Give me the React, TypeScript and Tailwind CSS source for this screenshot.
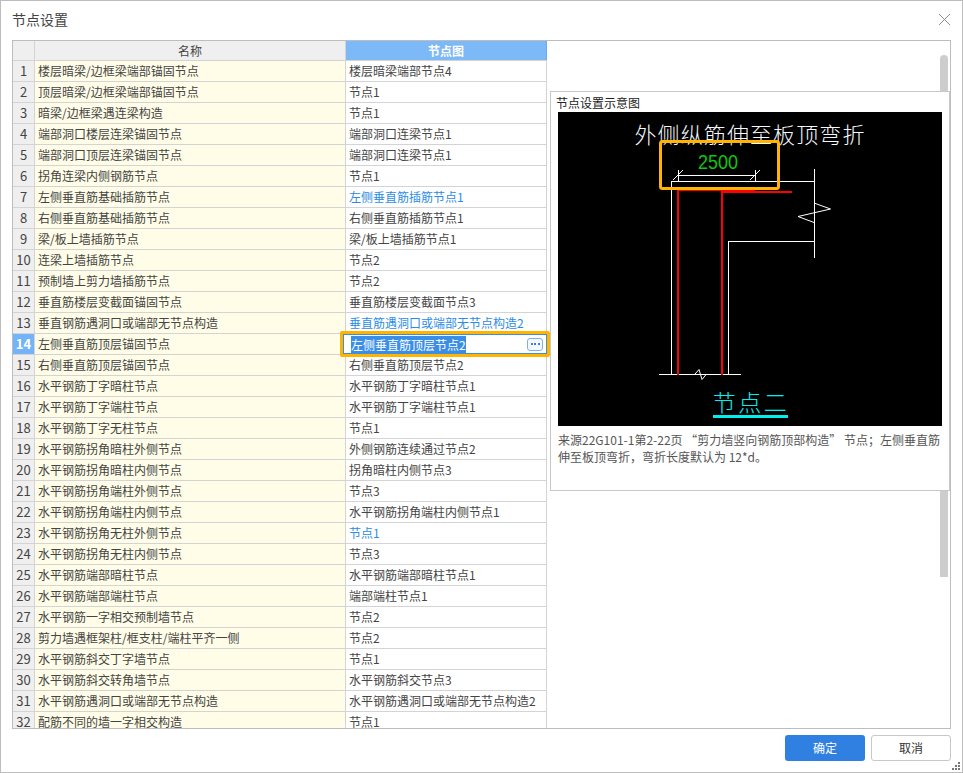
const font = "font-['Noto_Sans_CJK_SC','Noto_Sans',sans-serif]";

type Row = { name: string; node: string; link?: boolean };

const rows: Row[] = [
  { name: "楼层暗梁/边框梁端部锚固节点", node: "楼层暗梁端部节点4" },
  { name: "顶层暗梁/边框梁端部锚固节点", node: "节点1" },
  { name: "暗梁/边框梁遇连梁构造", node: "节点1" },
  { name: "端部洞口楼层连梁锚固节点", node: "端部洞口连梁节点1" },
  { name: "端部洞口顶层连梁锚固节点", node: "端部洞口连梁节点1" },
  { name: "拐角连梁内侧钢筋节点", node: "节点1" },
  { name: "左侧垂直筋基础插筋节点", node: "左侧垂直筋插筋节点1", link: true },
  { name: "右侧垂直筋基础插筋节点", node: "右侧垂直筋插筋节点1" },
  { name: "梁/板上墙插筋节点", node: "梁/板上墙插筋节点1" },
  { name: "连梁上墙插筋节点", node: "节点2" },
  { name: "预制墙上剪力墙插筋节点", node: "节点2" },
  { name: "垂直筋楼层变截面锚固节点", node: "垂直筋楼层变截面节点3" },
  { name: "垂直钢筋遇洞口或端部无节点构造", node: "垂直筋遇洞口或端部无节点构造2", link: true },
  { name: "左侧垂直筋顶层锚固节点", node: "左侧垂直筋顶层节点2" },
  { name: "右侧垂直筋顶层锚固节点", node: "右侧垂直筋顶层节点2" },
  { name: "水平钢筋丁字暗柱节点", node: "水平钢筋丁字暗柱节点1" },
  { name: "水平钢筋丁字端柱节点", node: "水平钢筋丁字端柱节点1" },
  { name: "水平钢筋丁字无柱节点", node: "节点1" },
  { name: "水平钢筋拐角暗柱外侧节点", node: "外侧钢筋连续通过节点2" },
  { name: "水平钢筋拐角暗柱内侧节点", node: "拐角暗柱内侧节点3" },
  { name: "水平钢筋拐角端柱外侧节点", node: "节点3" },
  { name: "水平钢筋拐角端柱内侧节点", node: "水平钢筋拐角端柱内侧节点1" },
  { name: "水平钢筋拐角无柱外侧节点", node: "节点1", link: true },
  { name: "水平钢筋拐角无柱内侧节点", node: "节点3" },
  { name: "水平钢筋端部暗柱节点", node: "水平钢筋端部暗柱节点1" },
  { name: "水平钢筋端部端柱节点", node: "端部端柱节点1" },
  { name: "水平钢筋一字相交预制墙节点", node: "节点2" },
  { name: "剪力墙遇框架柱/框支柱/端柱平齐一侧", node: "节点2" },
  { name: "水平钢筋斜交丁字墙节点", node: "节点1" },
  { name: "水平钢筋斜交转角墙节点", node: "水平钢筋斜交节点3" },
  { name: "水平钢筋遇洞口或端部无节点构造", node: "水平钢筋遇洞口或端部无节点构造2" },
  { name: "配筋不同的墙一字相交构造", node: "节点1" },
];

const NodeDiagram = () => (
  <svg viewBox="558 112 384 314" className="block w-[384px] h-[314px] bg-black">
    <text x="750" y="143" textAnchor="middle" fill="#f4f8ff" fontSize="22" letterSpacing="1.1" fontWeight="300">
      外侧纵筋伸至板顶弯折
    </text>
    <text x="698" y="169" fill="#0bc80b" fontSize="20" textLength="40" lengthAdjust="spacingAndGlyphs" fontFamily="Liberation Sans, sans-serif">
      2500
    </text>
    <g stroke="#fff" strokeWidth="1" fill="none" shapeRendering="crispEdges">
      <path d="M678 175.5H756M678.5 170V181M755.5 170V181" />
      <path d="M672 181.5H814.5M671.5 181V375M814.5 169V258" />
      <path d="M728 241.5H814.5M728.5 241V375" />
      <path d="M659 374.5H741" />
    </g>
    <g stroke="#fff" strokeWidth="1" fill="none">
      <path d="M673 180L683 170M750 180L760 170" />
      <path d="M814 203L830.5 209L798 216.5L814 222.5" />
      <path d="M695 374L699 369.5L702 379.5L706.5 374" />
    </g>
    <g stroke="#ff0000" strokeWidth="2" fill="none">
      <path d="M678 375V190H755" />
      <path d="M722 375V192H792" />
    </g>
    <rect x="660.5" y="141.5" width="118" height="47" rx="2" fill="none" stroke="#ffb400" strokeWidth="3" />
    <text x="751" y="411" textAnchor="middle" fill="#00f0f0" fontSize="23" letterSpacing="2.5" fontWeight="300">
      节点二
    </text>
    <rect x="713" y="415" width="75" height="3" fill="#00f0f0" />
  </svg>
);

export default function App() {
  return (
    <div className={`relative flex h-[773px] w-[963px] flex-col overflow-hidden border border-[#bdbdbd] bg-white text-xs text-[#444] ${font}`}>
      {/* title bar */}
      <div className="flex h-[39px] shrink-0 items-center justify-between pb-[2px] pl-[11px] pr-[11px]">
        <span className="text-[14px] text-[#444]">节点设置</span>
        <svg width="13" height="13" viewBox="0 0 13 13" className="stroke-[#8c8c8c]">
          <path d="M1 1L12 12M12 1L1 12" fill="none" strokeWidth="1" />
        </svg>
      </div>

      {/* table area */}
      <div className="relative mx-[11px] h-[689px] shrink-0 border border-[#bdbdbd]">
        <div className="h-full w-full overflow-hidden">
          <div className="flex h-[20px] w-[534px] border-b border-[#d4d4d4] bg-[#efefef] leading-[19px]">
            <div className="w-[22px] shrink-0 border-r border-[#d4d4d4]" />
            <div className="w-[311px] shrink-0 border-r border-[#d4d4d4] text-center">名称</div>
            <div className="w-[201px] shrink-0 border-r border-[#6ea8ee] bg-[#7db8f7] text-center font-bold text-white">节点图</div>
          </div>
          {rows.map((row, i) => (
            <div key={i} className="flex h-[21px] w-[534px] border-b border-[#d4d4d4] leading-[20px]">
              <div className={i === 13 ? "w-[22px] shrink-0 border-r border-[#d4d4d4] bg-[#73b4f8] text-center text-[13px] font-bold text-white" : "w-[22px] shrink-0 border-r border-[#d4d4d4] bg-[#efefef] text-center text-[13px]"}>
                {i + 1}
              </div>
              <div className="w-[311px] shrink-0 truncate border-r border-[#d4d4d4] bg-[#fffde8] pl-[3px]">{row.name}</div>
              <div className={row.link ? "relative w-[201px] shrink-0 border-r border-[#d4d4d4] pl-[3px] text-[#2b8ce6]" : "relative w-[201px] shrink-0 border-r border-[#d4d4d4] pl-[3px]"}>
                {i === 13 ? (
                  <div className="absolute -left-[6px] -top-[3px] z-10 h-[26px] w-[210px] rounded-[2px] border-[3px] border-[#ffb400] bg-white">
                    <div className="flex h-full w-full items-center justify-between border border-[#3a8ee6] pl-[7px] pr-[3px]">
                      <span className="bg-[#3a8ee6] leading-[17px] text-white">{row.node}</span>
                      <span className="flex h-[13px] w-[16px] items-center justify-center gap-[1.5px] rounded-[3px] border border-[#7db0ea] bg-[#f5f9ff]">
                        <i className="h-[2px] w-[2px] bg-[#3a7fd5]" />
                        <i className="h-[2px] w-[2px] bg-[#3a7fd5]" />
                        <i className="h-[2px] w-[2px] bg-[#3a7fd5]" />
                      </span>
                    </div>
                  </div>
                ) : (
                  row.node
                )}
              </div>
            </div>
          ))}
        </div>

        {/* scrollbar, partly under the popup */}
        <div className="absolute right-[2px] top-[14px] h-[522px] w-[8px] rounded-t-[4px] bg-[#cdcdcd]" />

        {/* preview popup */}
        <div className="absolute left-[537px] top-[50px] z-20 h-[400px] w-[400px] border border-[#c8c8c8] bg-white">
          <div className="h-[20px] pl-[5px] pt-[3px] leading-[16px] text-[#222]">节点设置示意图</div>
          <div className="pl-[7px]">
            <NodeDiagram />
          </div>
          <p className="w-[392px] pl-[7px] pt-[5px] leading-[17px] text-[#555]">
            来源22G101-1第2-22页 “剪力墙竖向钢筋顶部构造” 节点；左侧垂直筋伸至板顶弯折，弯折长度默认为 12*d。
          </p>
        </div>
      </div>

      {/* footer */}
      <div className="flex justify-end gap-[6px] pr-[11px] pt-[6px]">
        <button className="h-[26px] w-[80px] rounded-[3px] bg-[#2f80e0] text-white">确定</button>
        <button className="h-[26px] w-[80px] rounded-[3px] border border-[#c8c8c8] bg-white text-[#333]">取消</button>
      </div>

      {/* resize grip */}
      <svg width="9" height="9" viewBox="0 0 9 9" className="absolute bottom-[1px] right-[1px] fill-[#777]">
        <rect x="6" y="0" width="2" height="2" />
        <rect x="3" y="3" width="2" height="2" />
        <rect x="6" y="3" width="2" height="2" />
        <rect x="0" y="6" width="2" height="2" />
        <rect x="3" y="6" width="2" height="2" />
        <rect x="6" y="6" width="2" height="2" />
      </svg>
    </div>
  );
}
